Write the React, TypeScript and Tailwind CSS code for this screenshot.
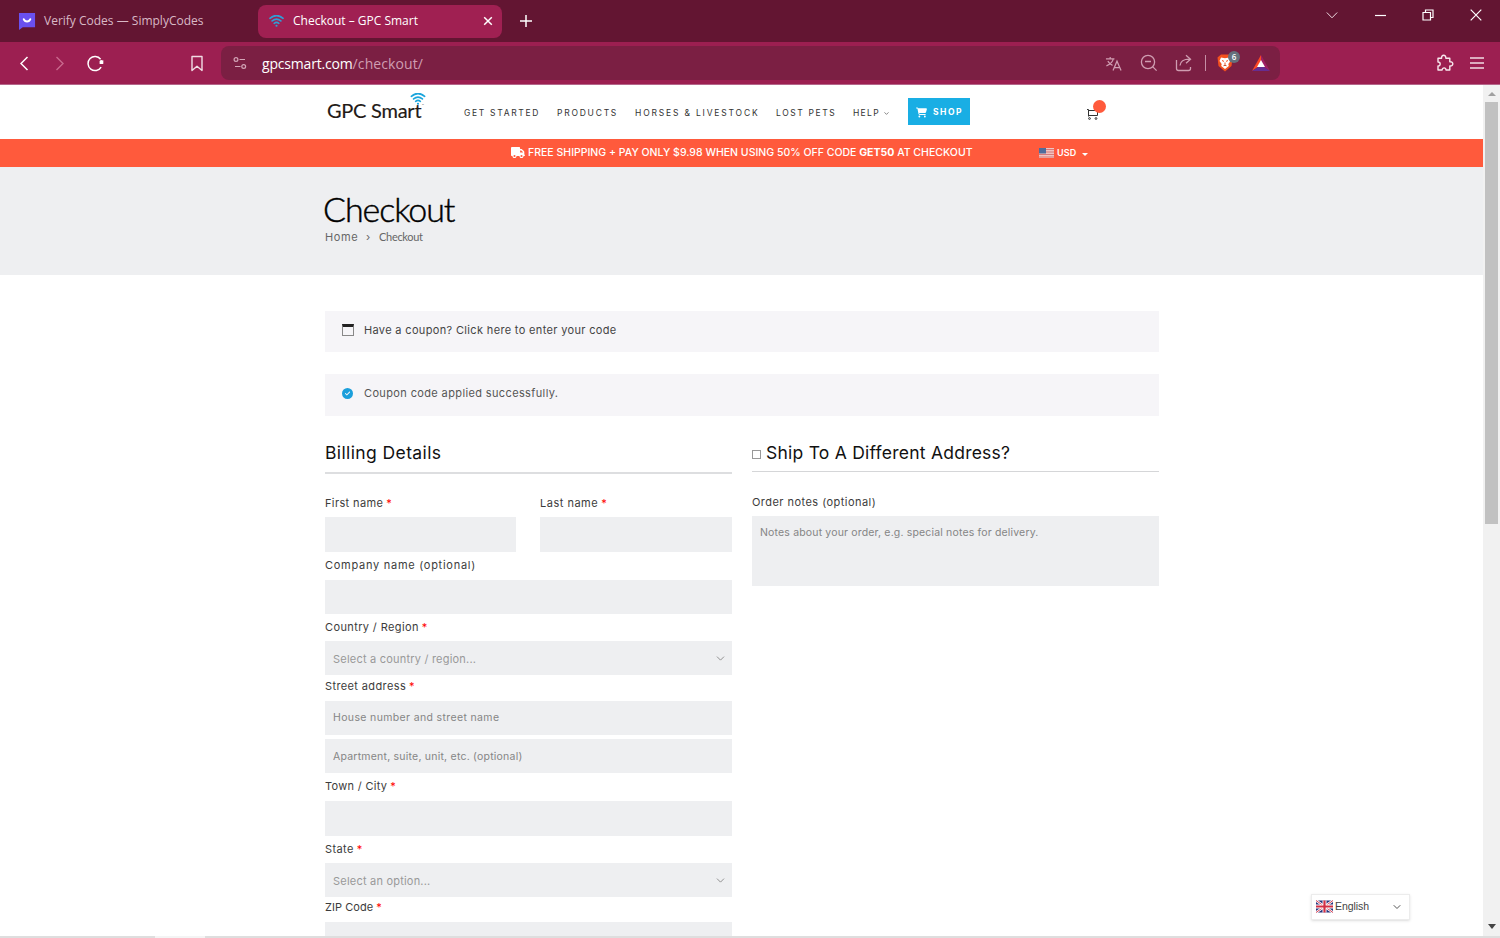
import type { ReactNode } from "react";
import { ChevronDown } from "lucide-react";
import { FaCartShopping, FaTruck, FaCircleCheck } from "react-icons/fa6";

function Wifi({ className, color = "#1ba5dc" }: { className: string; color?: string }) {
  return (
    <svg viewBox="0 0 24 19" className={className} fill="none" stroke={color} strokeWidth="2.7" strokeLinecap="round">
      <path d="M1.5 5.2C8-.2 16-.2 22.5 5.2" />
      <path d="M5 9.4c4.2-3.4 9.800-3.400 14 0" />
      <path d="M8.300 13.200c2.300-1.700 5.100-1.700 7.400 0" />
      <circle cx="12" cy="17" r="1.700" fill={color} stroke="none" />
    </svg>
  );
}

function TabStrip() {
  return (
    <div className="h-[42px] bg-[#631532] flex items-center text-[12px] font-['Open_Sans',sans-serif]">
      <div className="w-[258px] flex items-center pl-[19px] text-[#d9b9c6]">
        <svg viewBox="0 0 18 18" className="w-[17px] h-[17px] mr-[8px]">
          <path d="M0 0h17v15H4l-4 3z" fill="#6a50f0" />
          <path d="M5 6.5c1.2 3.4 5.8 3.4 7 0" stroke="#fff" strokeWidth="2" fill="none" strokeLinecap="round" />
        </svg>
        <span>Verify Codes — SimplyCodes</span>
      </div>
      <div className="w-[244px] h-[33px] rounded-lg bg-[#a02052] flex items-center pl-[11px] pr-[9px] text-white">
        <Wifi className="w-[15px] h-[12px] mr-[9px]" color="#2f9fd6" />
        <span className="flex-1">Checkout – GPC Smart</span>
        <svg viewBox="0 0 10 10" className="w-[10px] h-[10px]" stroke="#fff" strokeWidth="1.5">
          <path d="M1.2 1.2l7.6 7.6M8.8 1.2L1.2 8.8" />
        </svg>
      </div>
      <svg viewBox="0 0 12 12" className="w-[12px] h-[12px] ml-[18px]" stroke="#fff" strokeWidth="1.5">
        <path d="M6 0v12M0 6h12" />
      </svg>
      <div className="ml-auto flex items-center h-full pb-[12px] pr-[18px] gap-[36px]">
        <svg viewBox="0 0 12 12" className="w-[12px] h-[12px]" fill="none" stroke="#ecd9e0">
          <path d="M.8 3.5L6 8.8l5.2-5.3" />
        </svg>
        <svg viewBox="0 0 12 12" className="w-[12px] h-[12px]" stroke="#fff" strokeWidth="1.2">
          <path d="M1 6.5h11" />
        </svg>
        <svg viewBox="0 0 12 12" className="w-[12px] h-[12px]" fill="none" stroke="#fff" strokeWidth="1.2">
          <path d="M1 3.5h7.5V11H1zM3.5 3.3V1H11v7.5H8.7" />
        </svg>
        <svg viewBox="0 0 12 12" className="w-[12px] h-[12px]" stroke="#fff" strokeWidth="1.2">
          <path d="M.7.7l10.6 10.6M11.3.7L.7 11.3" />
        </svg>
      </div>
    </div>
  );
}

function Toolbar() {
  return (
    <div className="h-[43px] bg-[#9c1f51] border-b border-[#b5668a] flex items-center">
      <svg viewBox="0 0 9 15" className="w-[9px] h-[15px] ml-[20px]" fill="none" stroke="#fff" strokeWidth="1.5">
        <path d="M7.5 1L1 7.5 7.5 14" />
      </svg>
      <svg viewBox="0 0 9 15" className="w-[9px] h-[15px] ml-[26px]" fill="none" stroke="#c9698d" strokeWidth="1.4">
        <path d="M1.5 1L8 7.5 1.5 14" />
      </svg>
      <svg viewBox="0 0 16 16" className="w-[17px] h-[17px] ml-[23px]" fill="none" stroke="#fff" strokeWidth="1.4">
        <path d="M13.3 11.3A6.6 6.6 0 1 1 12.8 4" />
        <path d="M15.3 4.6v3.8h-3.8z" fill="#fff" stroke="none" />
        <circle cx="13.5" cy="6.5" r="1.8" fill="#fff" stroke="none" />
      </svg>
      <svg viewBox="0 0 12 16" className="w-[12px] h-[17px] ml-[87px]" fill="none" stroke="#f1dce4" strokeWidth="1.4">
        <path d="M1 1h10v14l-5-4.2L1 15z" strokeLinejoin="round" />
      </svg>
      <div className="w-[1059px] h-[34px] ml-[18px] rounded-lg bg-[#7b1f43] flex items-center pl-[12px] pr-[10px]">
        <svg viewBox="0 0 14 14" className="w-[14px] h-[14px] mr-[15px]" fill="none" stroke="#d3a5b7" strokeWidth="1.2">
          <circle cx="3" cy="3.5" r="1.9" />
          <path d="M6.5 3.5H12M2 10.5h5.5" />
          <circle cx="10.7" cy="10.5" r="1.9" />
        </svg>
        <span className="flex-1 font-['Open_Sans',sans-serif] text-[14px] tracking-[-0.18px] text-white">
          gpcsmart.com<span className="text-[#cf9db1] tracking-[0.1px]">/checkout/</span>
        </span>
        <svg viewBox="0 0 18 18" className="w-[17px] h-[17px] mr-[18px]" fill="none" stroke="#cf9db1" strokeWidth="1.3">
          <path d="M1 4h9M5.5 2v2M8.8 4C8 7.5 5 10 1.5 11.5M3 6.5c1.500 2.500 3 3.800 5 4.500" />
          <path d="M8.500 16.500L12.700 6.500l4.300 10M10 13.300h5.500" />
        </svg>
        <svg viewBox="0 0 18 18" className="w-[18px] h-[18px] mr-[17px]" fill="none" stroke="#cf9db1" strokeWidth="1.3">
          <circle cx="8" cy="8" r="6.6" />
          <path d="M5 7.5h6M12.6 12.6l4 4" />
        </svg>
        <svg viewBox="0 0 18 18" className="w-[18px] h-[18px] mr-[12px]" fill="none" stroke="#cf9db1" strokeWidth="1.3">
          <path d="M1.5 6v8.500q0 2 2 2h10q2 0 2-2v-1.500" />
          <path d="M5 11.500c.5-4.500 3-6.300 9.800-6.300M11 1.200l4.500 4-4.500 4" />
        </svg>
        <div className="w-px h-[16px] bg-[#c58fa5] mr-[11px]" />
        <div className="relative mr-[19px]">
          <svg viewBox="0 0 16 18" className="w-[16px] h-[18px]">
            <path d="M4 .5h8l3.500 3-1 8.500L8 17.500 1.500 12l-1-8.500z" fill="#f4511e" />
            <path d="M4 3.500l4 .8 4-.8 1.500 3.500-2.200 3 .5 2L8 15 4.200 12l.5-2-2.200-3z" fill="#fff" />
            <path d="M5 6.500l2 .9M11 6.500l-2 .9M8 8.500v1.700M6.500 11.800L8 10.800l1.500 1" stroke="#f4511e" />
          </svg>
          <span className="absolute left-[11px] -top-[3px] w-[12px] h-[12px] rounded-full bg-[#66707c] text-white text-[8px] leading-[12px] text-center font-['Open_Sans',sans-serif] font-semibold">
            6
          </span>
        </div>
        <svg viewBox="0 0 18 16" className="w-[18px] h-[16px]">
          <path d="M9 0L0 16l9-6z" fill="#ff4724" />
          <path d="M9 0l9 16-9-6z" fill="#9e1f63" />
          <path d="M0 16h18l-9-6z" fill="#662d91" />
          <path d="M9 5l-4 7h8z" fill="#fff" />
        </svg>
      </div>
      <svg viewBox="0 0 18 18" className="w-[18px] h-[18px] ml-auto mr-[16px]" fill="none" stroke="#f7e7ed" strokeWidth="1.4" strokeLinejoin="round">
        <path d="M2 4.200h3.600C5 .2 10.300.2 9.800 4.200h4v3.600c4-.6 4 4.600 0 4.200v4H10c.2-2.800-3.900-2.800-3.900 0H2v-4c2.900.2 2.900-4 0-4z" />
      </svg>
      <svg viewBox="0 0 14 12" className="w-[14px] h-[12px] mr-[16px]" stroke="#f1dce4" strokeWidth="1.3">
        <path d="M0 1h14M0 6h14M0 11h14" />
      </svg>
    </div>
  );
}

function SiteHeader() {
  return (
    <header className="h-[54px] flex items-center text-[8.5px] text-[#333]">
      <div className="relative w-[100px] ml-[327px] mb-[5px]">
        <span className="font-[Lato,sans-serif] text-[20px] leading-[24px] tracking-[-0.25px] text-[#231a16] [-webkit-text-stroke:0.15px_#231a16] whitespace-nowrap">
          GPC Smart
        </span>
        <span className="absolute left-[95px] top-[6px] text-[3px] leading-[4px]">™</span>
        <Wifi className="absolute -top-[5px] left-[83px] w-[16px] h-[12px]" />
      </div>
      <nav className="flex items-center ml-[37px] mt-[2px] whitespace-nowrap">
        <a className="w-[93px] tracking-[1.68px]">GET STARTED</a>
        <a className="w-[78px] tracking-[1.76px]">PRODUCTS</a>
        <a className="w-[141px] tracking-[1.82px]">HORSES &amp; LIVESTOCK</a>
        <a className="w-[77px] tracking-[1.6px]">LOST PETS</a>
        <a className="w-[55px] flex items-center tracking-[1.3px]">
          HELP
          <ChevronDown className="w-[7px] h-[7px] ml-[3px]" />
        </a>
      </nav>
      <a className="w-[62px] h-[27px] mb-px bg-[#19aee4] text-white font-bold flex items-center pl-[8px] pt-px">
        <FaCartShopping className="w-[11px] h-[11px] mr-[6px]" />
        <span className="tracking-[1.5px]">SHOP</span>
      </a>
      <div className="relative ml-[117px]">
        <svg viewBox="0 0 12 12" className="w-[12px] h-[12px] mt-[4px]" fill="none" stroke="#333" strokeWidth="1">
          <path d="M0 1.5h1.5v7M1.5 2.5h9v5M1.5 7.500h9" />
          <circle cx="2.500" cy="10.500" r=".9" />
          <circle cx="9" cy="10.500" r=".9" />
        </svg>
        <span className="absolute left-[6px] -top-[4px] w-[13px] h-[13px] rounded-full bg-[#ff5a3c]" />
      </div>
    </header>
  );
}

function PromoBar() {
  return (
    <div className="h-[28px] bg-[#ff5a3c] flex items-center pl-[511px] pb-px text-white whitespace-nowrap">
      <FaTruck className="w-[14px] h-[13px] mb-px mr-[3px]" />
      <p className="w-[511px] text-[10.5px] font-medium tracking-[0.01px]">
        FREE SHIPPING + PAY ONLY $9.98 WHEN USING 50% OFF CODE <b>GET50</b> AT CHECKOUT
      </p>
      <svg viewBox="0 0 15 10" className="w-[15px] h-[10px] mt-px">
        <path d="M0 0h15v10H0z" fill="#f0c4c0" />
        <path d="M0 1.5h15M0 4h15M0 6.5h15M0 9h15" stroke="#d8797a" />
        <path d="M0 0h7v5.5H0z" fill="#4f6c9c" />
      </svg>
      <span className="ml-[3px] text-[9px] font-semibold tracking-[0.1px]">USD</span>
      <span className="ml-[6px] mt-[3px] border-x-[3px] border-x-transparent border-t-[3px] border-t-white" />
    </div>
  );
}

function Label({ children, required, className = "" }: { children: ReactNode; required?: boolean; className?: string }) {
  return (
    <label className={`flex items-center text-[11px] leading-[16px] text-[#3c3c3c] whitespace-nowrap ${className}`}>
      {children}
      {required && <span className="ml-[3px] text-[#f00]">*</span>}
    </label>
  );
}

function Select({ children }: { children: ReactNode }) {
  return (
    <div className="h-[34px] bg-[#eeeff1] flex items-center justify-between pl-[8px] pr-[5px] pt-[3px] text-[11px] tracking-[0.21px] text-[#999]">
      {children}
      <ChevronDown className="w-[13px] h-[13px] mb-[2px] text-[#888]" strokeWidth={1.7} />
    </div>
  );
}

function Field({ className, placeholder }: { className: string; placeholder?: string }) {
  return (
    <input
      className={`block w-full bg-[#eeeff1] px-[8px] text-[10.5px] placeholder:text-[#858585] outline-none ${className}`}
      placeholder={placeholder}
    />
  );
}

function BillingForm() {
  return (
    <section className="w-[407px]">
      <h3 className="h-[58px] border-b-2 border-[#dddee0] pt-[24px] text-[17.5px] leading-[26px] tracking-[0.39px] text-[#111]">
        Billing Details
      </h3>
      <div className="flex gap-[24px]">
        <div className="w-[191px]">
          <Label required className="h-[43px] pt-[14px] tracking-[0.38px]">First name</Label>
          <Field className="h-[35px]" />
        </div>
        <div className="w-[192px]">
          <Label required className="h-[43px] pt-[14px] tracking-[0.5px]">Last name</Label>
          <Field className="h-[35px]" />
        </div>
      </div>
      <Label className="h-[28px] pb-[2px] tracking-[0.73px]">Company name (optional)</Label>
      <Field className="h-[34px]" />
      <Label required className="h-[27px] pb-[2px] tracking-[0.38px]">Country / Region</Label>
      <Select>Select a country / region...</Select>
      <Label required className="h-[26px] pb-[4px] tracking-[0.38px]">Street address</Label>
      <Field className="h-[34px] pb-[2px] tracking-[0.36px]" placeholder="House number and street name" />
      <Field className="h-[34px] mt-[4px] tracking-[0.22px]" placeholder="Apartment, suite, unit, etc. (optional)" />
      <Label required className="h-[28px] pb-[2px] tracking-[0.3px]">Town / City</Label>
      <Field className="h-[35px]" />
      <Label required className="h-[27px] pb-[2px] tracking-[0.38px]">State</Label>
      <Select>Select an option...</Select>
      <Label required className="h-[25px] pb-[5px] tracking-[0.05px]">ZIP Code</Label>
      <Field className="h-[35px]" />
    </section>
  );
}

function ShippingForm() {
  return (
    <section className="w-[407px]">
      <h3 className="h-[56px] border-b border-[#d5d6d8] pt-[24px] text-[17.5px] leading-[26px] tracking-[0.24px] text-[#111] flex items-start whitespace-nowrap">
        <span className="w-[9px] h-[9px] mt-[10px] mr-[5px] border border-[#999] bg-white" />
        Ship To A Different Address?
      </h3>
      <Label className="h-[44px] pt-[15px] tracking-[0.46px]">Order notes (optional)</Label>
      <textarea
        className="block w-full h-[70px] bg-[#eeeff1] px-[8px] py-[9px] text-[10.5px] leading-[16px] tracking-[0.165px] placeholder:text-[#858585] resize-none outline-none"
        placeholder="Notes about your order, e.g. special notes for delivery."
      />
    </section>
  );
}

function LanguagePicker() {
  return (
    <div className="absolute left-[1311px] top-[809px] w-[99px] h-[26px] bg-white border border-[#ececec] shadow-sm flex items-center pl-[4px] pr-[6px] font-['Liberation_Sans',sans-serif] text-[10.5px] text-[#444]">
      <svg viewBox="0 0 17 12" className="w-[17px] h-[13px] mr-[3px] mb-px">
        <path d="M0 0h17v12H0z" fill="#26337c" />
        <path d="M0 0l17 12M17 0L0 12" stroke="#fff" strokeWidth="2.5" />
        <path d="M0 0l17 12M17 0L0 12" stroke="#d22f45" strokeWidth=".9" />
        <path d="M8.5 0v12M0 6h17" stroke="#fff" strokeWidth="4" />
        <path d="M8.5 0v12M0 6h17" stroke="#d22f45" strokeWidth="2.2" />
      </svg>
      <span className="flex-1 -ml-px tracking-[-0.05px]">English</span>
      <ChevronDown className="w-[12px] h-[12px] text-[#555]" />
    </div>
  );
}

function Scrollbar() {
  return (
    <div className="w-[17px] h-[851px] bg-[#f1f1f1] flex flex-col items-center">
      <span className="mt-[7px] border-x-[4px] border-x-transparent border-b-[4px] border-b-[#a0a0a0]" />
      <div className="mt-[6px] w-[13px] h-[422px] bg-[#c1c1c1]" />
      <span className="mt-auto mb-[7px] border-x-[4px] border-x-transparent border-t-[5px] border-t-[#444]" />
    </div>
  );
}

export default function App() {
  return (
    <div className="w-[1500px] h-[938px] overflow-hidden bg-white flex flex-col font-[Inter,sans-serif]">
      <TabStrip />
      <Toolbar />
      <div className="relative flex h-[851px] overflow-hidden">
        <main className="w-[1483px]">
          <SiteHeader />
          <PromoBar />
          <div className="h-[108px] bg-[#eeeff1] pl-[324px] pt-[22px]">
            <h1 className="-ml-px font-[Lato,sans-serif] text-[34px] leading-[40px] font-light tracking-[-1.05px] text-black [-webkit-text-stroke:0.45px_black]">
              Checkout
            </h1>
            <div className="flex items-center text-[11px] leading-[16px] text-[#666] pl-px">
              <span className="w-[41px] tracking-[0.6px]">Home</span>
              <span className="w-[13px]">›</span>
              <span className="font-[Lato,sans-serif] tracking-[-0.3px]">Checkout</span>
            </div>
          </div>
          <div className="w-[834px] ml-[325px] mt-[36px]">
            <div className="h-[41px] bg-[#f6f5f8] flex items-center pl-[17px] pb-[3px] text-[11px] text-[#444]">
              <span className="w-[12px] h-[12px] mr-[10px] border border-t-[3px] border-[#888] border-t-[#222]" />
              <span className="tracking-[0.34px]">Have a coupon? Click here to enter your code</span>
            </div>
            <div className="h-[42px] mt-[22px] bg-[#f6f5f8] flex items-center pl-[17px] pb-[3px] text-[11px] text-[#555]">
              <FaCircleCheck className="w-[11px] h-[11px] mr-[11px] text-[#1b9fdb]" />
              <span className="tracking-[0.37px]">Coupon code applied successfully.</span>
            </div>
            <div className="flex justify-between">
              <BillingForm />
              <ShippingForm />
            </div>
          </div>
        </main>
        <Scrollbar />
        <LanguagePicker />
      </div>
      <div className="h-[2px] bg-[#dedede] pl-[155px]">
        <div className="w-[50px] h-full bg-[#f4f4f4]" />
      </div>
    </div>
  );
}
